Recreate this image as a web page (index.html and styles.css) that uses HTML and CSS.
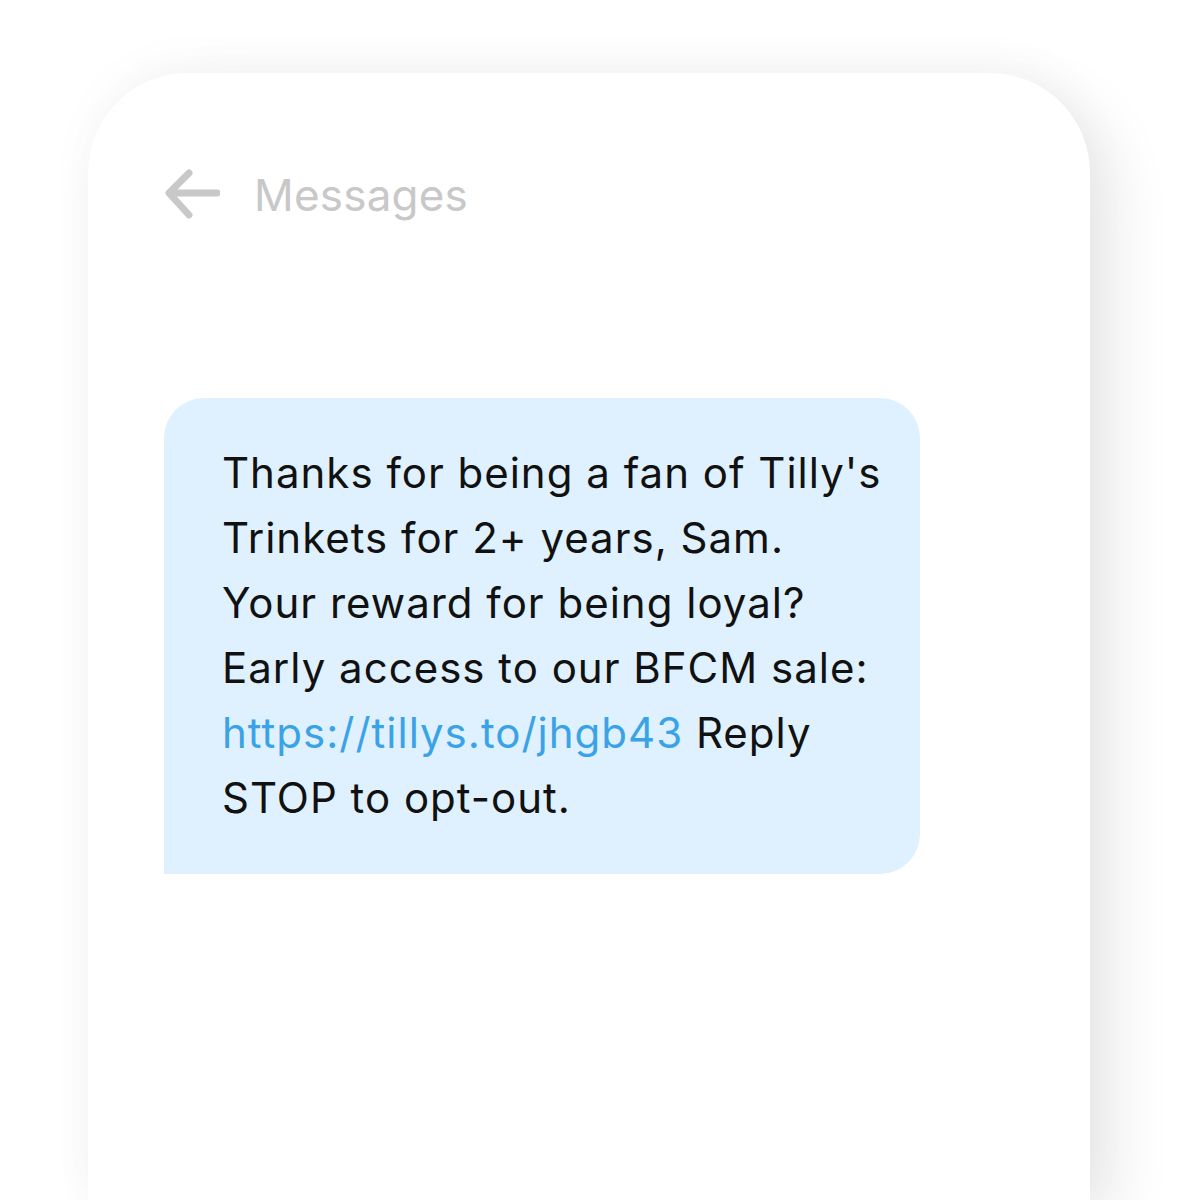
FILE: index.html
```html
<!DOCTYPE html>
<html>
<head>
<meta charset="utf-8">
<link rel="stylesheet" href="styles.css">
</head>
<body>
<div class="stage">
  <div class="phone">
    <div class="header">
      <svg class="back" width="56" height="54" viewBox="0 0 56 54">
        <path d="M53 25 H6 M25 5 L5 25 L25 47" fill="none" stroke="#c8c8c8" stroke-width="7" stroke-linecap="round" stroke-linejoin="round"/>
      </svg>
      <span class="title">Messages</span>
    </div>
    <div class="bubble">
      <p class="msg">Thanks for being a fan of Tilly's<br>Trinkets for 2+ years, Sam.<br>Your reward for being loyal?<br>Early access to our BFCM sale:<br><span class="link">https://tillys.to/jhgb43</span> Reply<br>STOP to opt-out.</p>
    </div>
  </div>
</div>
</body>
</html>
```

FILE: styles.css
```css
html, body {
  margin: 0;
  padding: 0;
  background: #ffffff;
  overflow: hidden;
}
.stage {
  width: 1200px;
  height: 1200px;
  padding: 73px 0 0 88px;
  box-sizing: border-box;
  overflow: hidden;
}
.phone {
  width: 1002px;
  height: 1127px;
  background: #ffffff;
  border-radius: 100px 100px 0 0;
  box-shadow: 24px 20px 60px rgba(0, 0, 0, 0.09), 0 -10px 50px rgba(0, 0, 0, 0.03);
  padding: 95px 0 0 76px;
  box-sizing: border-box;
}
.header {
  display: flex;
  align-items: center;
  gap: 36px;
  height: 54px;
}
.back {
  display: block;
}
.title {
  font-family: Inter, "Open Sans", sans-serif;
  font-size: 44px;
  color: #c8c8c8;
  letter-spacing: 0.2px;
  margin-left: -2px;
}
.bubble {
  margin-top: 176px;
  width: 756px;
  background: #dff1fe;
  border-radius: 40px 40px 40px 0;
  padding: 42px 20px 44px 58px;
  box-sizing: border-box;
}
.msg {
  margin: 0;
  font-family: Inter, "Open Sans", sans-serif;
  font-size: 42px;
  line-height: 65px;
  letter-spacing: 1px;
  color: #111111;
  white-space: nowrap;
}
.link {
  color: #3aa3e8;
}
```
